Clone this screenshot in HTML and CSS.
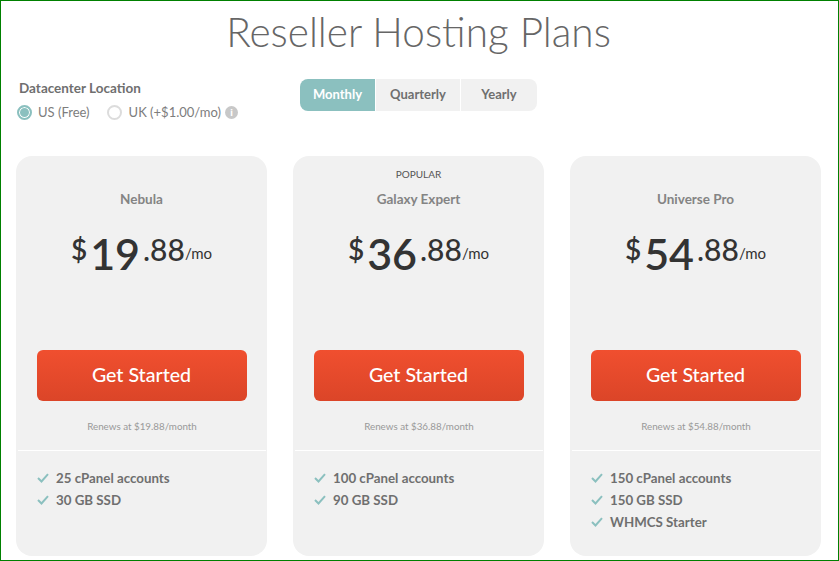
FILE: index.html
```html
<!DOCTYPE html>
<html lang="en">

<head>
  <meta charset="UTF-8">
  <title>Reseller Hosting Plans</title>
  <link rel="stylesheet" href="styles.css">
</head>

<body>
  <div class="page">
    <h1 class="title">Reseller Hosting Plans</h1>

    <div class="options">
      <div class="location">
        <div class="location-label">Datacenter Location</div>
        <div class="radios">
          <span class="radio-item"><span class="radio checked"></span>US (Free)</span>
          <span class="radio-item"><span class="radio"></span>UK (+$1.00/mo)<span class="info">i</span></span>
        </div>
      </div>
      <div class="terms">
        <span class="term term-monthly active">Monthly</span>
        <span class="term term-quarterly">Quarterly</span>
        <span class="term term-yearly">Yearly</span>
      </div>
    </div>

    <div class="plans">
      <div class="plan">
        <div class="popular"></div>
        <div class="plan-name">Nebula</div>
        <div class="price"><span class="currency">$</span><span class="whole">19</span><span class="cents">.88</span><span class="per">/mo</span></div>
        <a class="cta">Get Started</a>
        <div class="renews">Renews at $19.88/month</div>
        <ul class="features">
          <li><svg class="check" viewBox="0 0 12 10"><path d="M1 5 L4.5 8.5 L11 1.2"/></svg>25 cPanel accounts</li>
          <li><svg class="check" viewBox="0 0 12 10"><path d="M1 5 L4.5 8.5 L11 1.2"/></svg>30 GB SSD</li>
        </ul>
      </div>

      <div class="plan">
        <div class="popular">POPULAR</div>
        <div class="plan-name">Galaxy Expert</div>
        <div class="price"><span class="currency">$</span><span class="whole">36</span><span class="cents">.88</span><span class="per">/mo</span></div>
        <a class="cta">Get Started</a>
        <div class="renews">Renews at $36.88/month</div>
        <ul class="features">
          <li><svg class="check" viewBox="0 0 12 10"><path d="M1 5 L4.5 8.5 L11 1.2"/></svg>100 cPanel accounts</li>
          <li><svg class="check" viewBox="0 0 12 10"><path d="M1 5 L4.5 8.5 L11 1.2"/></svg>90 GB SSD</li>
        </ul>
      </div>

      <div class="plan">
        <div class="popular"></div>
        <div class="plan-name">Universe Pro</div>
        <div class="price"><span class="currency">$</span><span class="whole">54</span><span class="cents">.88</span><span class="per">/mo</span></div>
        <a class="cta">Get Started</a>
        <div class="renews">Renews at $54.88/month</div>
        <ul class="features">
          <li><svg class="check" viewBox="0 0 12 10"><path d="M1 5 L4.5 8.5 L11 1.2"/></svg>150 cPanel accounts</li>
          <li><svg class="check" viewBox="0 0 12 10"><path d="M1 5 L4.5 8.5 L11 1.2"/></svg>150 GB SSD</li>
          <li><svg class="check" viewBox="0 0 12 10"><path d="M1 5 L4.5 8.5 L11 1.2"/></svg>WHMCS Starter</li>
        </ul>
      </div>
    </div>
  </div>
</body>

</html>
```

FILE: styles.css
```css
html, body {
  margin: 0;
  background-color: #fff;
}

body {
  font-family: "Lato", "Liberation Sans", sans-serif;
}

.page {
  box-sizing: border-box;
  width: 839px;
  height: 561px;
  border: 1px solid #008000;
  padding: 0 17px 0 15px;
  overflow: hidden;
}

.title {
  margin: 8px 0 0;
  height: 45px;
  line-height: 45px;
  text-align: center;
  font-size: 40.5px;
  font-weight: 300;
  color: #666;
}

.options {
  display: flex;
  margin-top: 25px;
  height: 77px;
}

.location {
  width: 284px;
  padding-top: 1px;
  padding-left: 1px;
  margin-right: -1px;
}

.location-label {
  padding-left: 2px;
  font-size: 13.5px;
  line-height: 17px;
  font-weight: 700;
  color: #6f6f6f;
}

.radios {
  display: flex;
  gap: 17px;
  margin-top: 7px;
}

.radio-item {
  display: flex;
  align-items: center;
  font-size: 13px;
  line-height: 16px;
  color: #7d7d7d;
}

.radio {
  box-sizing: border-box;
  width: 15px;
  height: 15px;
  margin-right: 7px;
  border: 2px solid #dcdcdc;
  border-radius: 50%;
  background: #fff;
}

.radio.checked {
  margin-right: 6px;
  border-color: #8bc0bf;
  background: #8bc0bf;
  box-shadow: inset 0 0 0 1px #fff;
}

.info {
  width: 13px;
  height: 13px;
  margin-left: 4px;
  border-radius: 50%;
  background: #c8c8c8;
  color: #fff;
  font-size: 10px;
  line-height: 13px;
  font-weight: 900;
  text-align: center;
}

.terms {
  display: flex;
  align-self: flex-start;
  height: 32px;
  gap: 1px;
}

.term {
  box-sizing: border-box;
  line-height: 30px;
  text-align: center;
  font-size: 13px;
  font-weight: 700;
  color: #6f6f6f;
  background: #f1f1f1;
}

.term-monthly {
  width: 75px;
  border-radius: 8px 0 0 8px;
}

.term-quarterly {
  width: 84px;
}

.term-yearly {
  width: 76px;
  border-radius: 0 8px 8px 0;
}

.term.active {
  background: #8bc0bf;
  color: #fff;
}

.plans {
  display: grid;
  grid-template-columns: repeat(3, 251px);
  column-gap: 26px;
}

.plan {
  box-sizing: border-box;
  height: 400px;
  padding-top: 1px;
  background: #f1f1f1;
  border-radius: 16px;
  text-align: center;
}

.popular {
  height: 12px;
  margin-top: 11px;
  font-size: 10px;
  line-height: 12px;
  color: #555;
}

.plan-name {
  margin-top: 11px;
  font-size: 13.5px;
  line-height: 17px;
  font-weight: 700;
  color: #848484;
}

.price {
  display: flex;
  justify-content: center;
  align-items: flex-start;
  height: 55px;
  margin-top: 21px;
  color: #333;
  font-weight: 600;
}

.currency {
  font-size: 28px;
  line-height: 41px;
  font-weight: 600;
  margin-right: 3px;
}

.whole {
  font-size: 43px;
  line-height: 50px;
}

.cents {
  font-size: 30px;
  line-height: 41px;
  margin-left: 3px;
  font-weight: 500;
}

.per {
  font-size: 15px;
  line-height: 22px;
  font-weight: 400;
  margin-top: 13px;
}

.cta {
  display: block;
  width: 210px;
  height: 51px;
  margin: 66px auto 0;
  border-radius: 6px;
  background: linear-gradient(#f04f2f, #db4528);
  color: #fff;
  font-size: 19.6px;
  line-height: 49px;
  font-weight: 500;
}

.renews {
  margin: 18px 1px 0 2px;
  padding-bottom: 17px;
  border-bottom: 1px solid #fff;
  font-size: 9.8px;
  line-height: 14px;
  color: #999;
}

.features {
  list-style: none;
  margin: 16px 0 0;
  padding: 0 0 0 21px;
  text-align: left;
}

.features li {
  display: flex;
  align-items: center;
  height: 22px;
  font-size: 13.3px;
  font-weight: 700;
  color: #6f6f6f;
}

.check {
  width: 12px;
  height: 10px;
  margin-right: 7px;
  fill: none;
  stroke: #8bc0bf;
  stroke-width: 2;
}
```
